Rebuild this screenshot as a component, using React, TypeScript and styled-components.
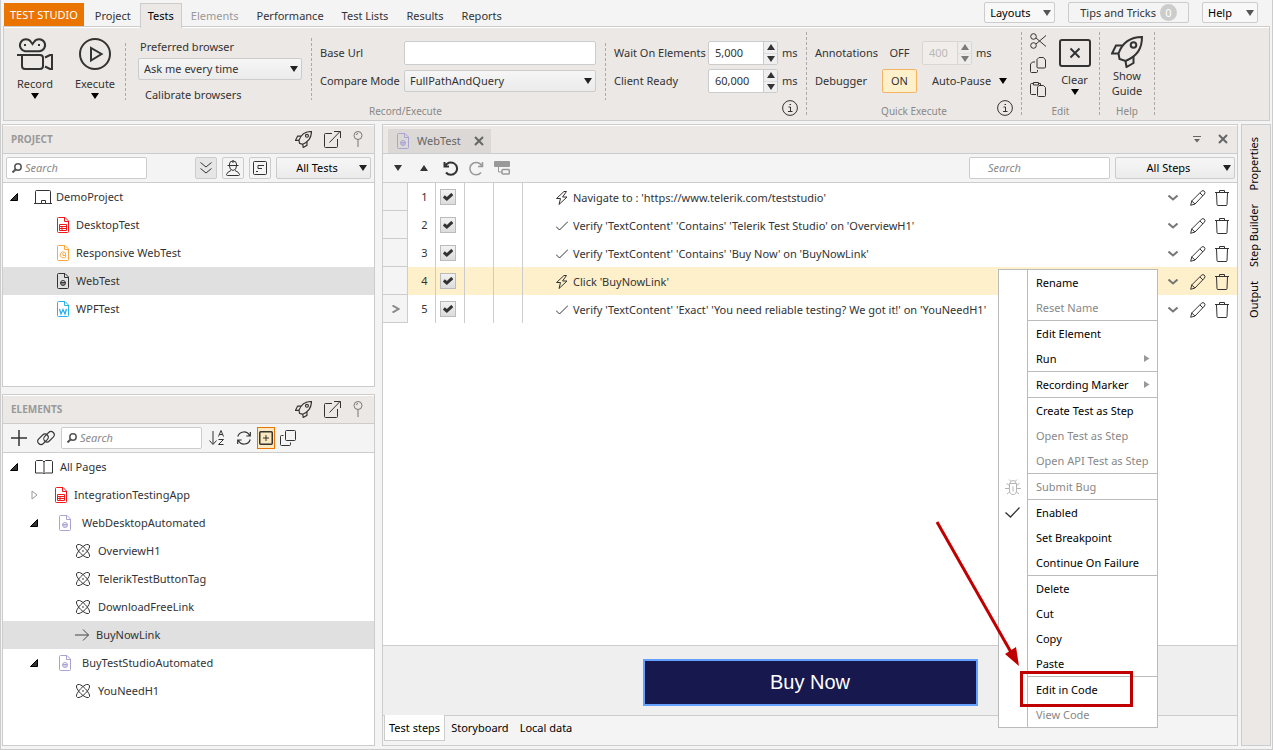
import React from 'react';
import styled, { createGlobalStyle, css } from 'styled-components';

const line = '#cccccc';
const ink = '#333333';
const panel = '#ece8e5';

const GlobalStyle = createGlobalStyle`
  *, *::before, *::after { box-sizing: border-box; }
  body {
    margin: 0;
    background: #f4f4f4;
    color: ${ink};
    font: 11px/16px "Noto Sans", "Open Sans", sans-serif;
  }
  button, input, select { font: inherit; color: inherit; margin: 0; }
  button { padding: 0; border: 0; background: none; cursor: pointer; }
  svg { display: block; flex: none; }
  ul { list-style: none; margin: 0; padding: 0; }
`;

/* ---------- icons ---------- */

type IconProps = { w?: number; h?: number; box?: string; sw?: number; color?: string; children?: React.ReactNode };

const Icon = ({ w = 16, h = 16, box, sw = 1, color = ink, children }: IconProps) => (
  <svg width={w} height={h} viewBox={box || `0 0 ${w} ${h}`} fill="none" stroke={color} strokeWidth={sw} aria-hidden="true">
    {children}
  </svg>
);

const Down = ({ color = '#000', w = 8, h = 6 }: { color?: string; w?: number; h?: number }) => (
  <svg width={w} height={h} viewBox="0 0 8 6" aria-hidden="true">
    <path d="M0 0h8L4 6z" fill={color} />
  </svg>
);

const Up = ({ color = ink, w = 8, h = 6 }: { color?: string; w?: number; h?: number }) => (
  <svg width={w} height={h} viewBox="0 0 8 6" aria-hidden="true">
    <path d="M0 6h8L4 0z" fill={color} />
  </svg>
);

const CameraIcon = () => (
  <Icon w={36} h={32} sw={2}>
    <path d="M8 13.200a6 6 0 1 1 6-9.200l1.500 2 1.500-2a6 6 0 1 1 5 9.200z" />
    <path d="M7 7h2M21 7h2" />
    <path d="M0 17h23q3 0 3 3v8q0 3-3 3H8q-3 0-3-3V17" />
    <path d="M28 19.500 33 17h2v14h-2l-5-2.500" />
  </Icon>
);

const PlayIcon = () => (
  <Icon w={32} h={32} sw={2}>
    <circle cx="16" cy="16" r="15" />
    <path d="M12 10v12.500L22.500 16z" />
  </Icon>
);

const ClearIcon = () => (
  <Icon w={32} h={28} sw={2}>
    <rect x="1" y="1" width="30" height="26" rx="2" />
    <path d="m11.500 9.500 9 9m0-9-9 9" />
  </Icon>
);

const RocketIcon = ({ size = 32, sw = 2 }: { size?: number; sw?: number }) => (
  <Icon w={size} h={size} box="0 0 32 32" sw={sw}>
    <path d="M31 1C21 1 12 5 7.500 17.500L8.500 23l6 2C26 20 31 13 31 1z" />
    <circle cx="22.500" cy="9" r="2.800" />
    <path d="M11.500 9.500H5L1 17.500h6.500M14.500 25l1 6 7-4v-7" />
  </Icon>
);

const ScissorsIcon = () => (
  <Icon w={17} h={16}>
    <circle cx="3.500" cy="3.500" r="2.800" />
    <circle cx="3.500" cy="12.500" r="2.800" />
    <path d="M6 5 16 13.500M6 11 16 2.500" />
  </Icon>
);

const CopyIcon = () => (
  <Icon w={16} h={16}>
    <path d="M9 .5h4.500L15.500 3v7q0 1-1 1H8q-1 0-1-1V2.500z" />
    <path d="M5 5H2.500L.5 7v7.500q0 1 1 1h5q1 0 1-1V13" />
  </Icon>
);

const PasteIcon = () => (
  <Icon w={16} h={16}>
    <path d="M6 13.500H1.500q-1 0-1-1v-9q0-1 1-1h2M3.500 1.500h5v2.500h-5zM8.500 2.500h2v2" />
    <path d="M9 4.500h4.500l2 2v8q0 1-1 1H8.500q-1 0-1-1V6z" />
  </Icon>
);

const InfoIcon = () => (
  <Icon w={16} h={16}>
    <circle cx="8" cy="8" r="7.400" />
    <path d="M6.500 7h2v4.500M6 11.500h4.500M7.500 4.500h1.500" />
  </Icon>
);

const PopOutIcon = () => (
  <Icon w={17} h={17}>
    <path d="M8 2.500H1.500q-1 0-1 1v12q0 1 1 1h11q1 0 1-1V8M5.500 11.500 15.500 1M10 .5h6.500V7" />
  </Icon>
);

const PinIcon = () => (
  <Icon w={10} h={16} color="#777">
    <circle cx="5" cy="4.500" r="4" />
    <path d="M3.500 4q0-1.500 1.500-1.500M5 9v7" />
  </Icon>
);

const SearchIcon = () => (
  <Icon w={10} h={10} sw={1.5} color="#555">
    <circle cx="6" cy="4" r="3.200" />
    <path d="M3.700 6.300.5 9.500" strokeWidth="2" />
  </Icon>
);

const ChevronsIcon = () => (
  <Icon w={12} h={12}>
    <path d="m.5.5 5.500 4.500L11.500.5M.5 6.500 6 11l5.500-4.500" />
  </Icon>
);

const WorkerIcon = () => (
  <Icon w={14} h={16}>
    <path d="M1.500 5.500h11M3.500 5V4q0-3 3.500-3t3.500 3v1M7 0v3M3.500 6q0 4 3.500 4.500Q10.500 10 10.500 6M5 10.500Q1 12 .5 14.500q0 1 1 1h11q1 0 1-1Q13 12 9 10.500" />
  </Icon>
);

const ReportIcon = () => (
  <Icon w={14} h={14}>
    <rect x=".5" y=".5" width="13" height="13" rx="1" />
    <path d="M5 4.500h6M5 7.500h4M5 4.500v3M3 10.500h2" />
  </Icon>
);

const LaptopIcon = () => (
  <Icon w={18} h={14}>
    <path d="M1.500 13V1.500q0-1 1-1h13q1 0 1 1V13M0 13.500h18M7.500 13v-2.500h4V13" />
  </Icon>
);

const BookIcon = () => (
  <Icon w={18} h={14}>
    <path d="M9 2v11M9 2 7.500.5h-6l-1 1v11.500h7L9 14l1.500-1h7V1.500l-1-1h-6z" />
  </Icon>
);

const sheet = 'M1.500.5H8L11.500 4v10.500q0 1-1 1h-9q-1 0-1-1v-13q0-1 1-1zM7.500.5V4.500h4';

const SheetIcon = ({ kind }: { kind: 'desktop' | 'mobile' | 'web' | 'webLight' | 'wpf' }) => {
  const color = { desktop: '#f01818', mobile: '#ffa53c', web: ink, webLight: '#a9a3d4', wpf: '#2bb0ec' }[kind];
  return (
    <Icon w={12} h={16} color={color}>
      <path d={sheet} />
      {kind === 'desktop' && <path d="M2.500 7.500h7v6h-7zM2.500 9.500h7M2.500 11.500h7M5 9.500v4" />}
      {kind === 'mobile' && <path d="M8 7.500A3 3 0 1 0 9 11M6 8v2.500h2.500V8" />}
      {(kind === 'web' || kind === 'webLight') && (
        <>
          <circle cx="6" cy="10" r="2.500" />
          <path d="M4 9.500h4M4 11h4" />
        </>
      )}
      {kind === 'wpf' && <path d="m2.500 8 1.500 5L6 8.500 8 13l1.500-5" strokeWidth="1.300" />}
    </Icon>
  );
};

const AtomIcon = () => (
  <Icon w={14} h={14} color="#333" sw={1}>
    <path d="M2 .5h1.500C7 1.500 12 7 13.500 11v1.500l-1 1H11C7 12.500 1.500 7 .5 3V1.500z" />
    <path d="M12 .5h-1.500C7 1.500 2 7 .5 11v1.500l1 1H3C7 12.500 12.500 7 13.500 3V1.500z" />
    <circle cx="7" cy="7" r=".4" />
  </Icon>
);

const ArrowIcon = () => (
  <Icon w={14} h={12} color="#444">
    <path d="M0 6h13.500M8 .5 13.500 6 8 11.500" />
  </Icon>
);

const Expanded = () => (
  <svg width="8" height="8" viewBox="0 0 8 8" aria-hidden="true">
    <path d="M7.500.5v7h-7z" fill="#333" stroke="#000" />
  </svg>
);

const Collapsed = () => (
  <Icon w={7} h={10} color="#999">
    <path d="M1 1v8l5-4z" />
  </Icon>
);

const PlusIcon = () => (
  <Icon w={16} h={16}>
    <path d="M8 0v16M0 8h16" strokeWidth="1.500" />
  </Icon>
);

const LinkIcon = () => (
  <Icon w={20} h={16} sw={1.1}>
    <rect x="1" y="6" width="12" height="6.500" rx="3.250" transform="rotate(-45 7 9.250)" />
    <rect x="7" y="3.500" width="12" height="6.500" rx="3.250" transform="rotate(-45 13 6.750)" />
  </Icon>
);

const SortIcon = () => (
  <Icon w={16} h={16}>
    <path d="M4 1v13M.5 10.500 4 14.500l3.500-4" />
    <path d="M9.500 6.500 12 .5l2.500 6M10.500 4.500h3M9.500 9.500h5l-5 5h5" />
  </Icon>
);

const RefreshIcon = () => (
  <Icon w={14} h={14} sw={1.2}>
    <path d="M.8 5.500A6.300 6.300 0 0 1 12.500 4.500M13.200 8.500A6.300 6.300 0 0 1 1.500 9.500M13.300 1v4h-4M.7 13V9h4" />
  </Icon>
);

const AddBoxIcon = () => (
  <Icon w={14} h={14}>
    <rect x=".75" y=".75" width="12.500" height="12.500" rx="1" strokeWidth="1.500" />
    <path d="M7 4v6M4 7h6" />
  </Icon>
);

const WindowsIcon = () => (
  <Icon w={16} h={16}>
    <rect x="5.500" y=".5" width="10" height="10" rx="1" />
    <path d="M3.500 5.500h-2q-1 0-1 1v8q0 1 1 1h8q1 0 1-1v-2" />
  </Icon>
);

const CloseIcon = () => (
  <Icon w={10} h={10} sw={2} color="#666">
    <path d="m1 1 8 8m0-8L1 9" />
  </Icon>
);

const UndoIcon = ({ redo = false }: { redo?: boolean }) => (
  <Icon w={15} h={15} sw={redo ? 1.5 : 2} color={redo ? '#999' : ink}>
    <g transform={redo ? 'translate(15 0) scale(-1 1)' : undefined}>
      <path d="M1.500 1v4.500H6M2 5.500A6.200 6.200 0 1 1 3 11.500" />
    </g>
  </Icon>
);

const GroupIcon = () => (
  <Icon w={16} h={14} color="#999">
    <rect x="0" y="0" width="16" height="6" rx="1" fill="#999" stroke="none" />
    <path d="M4.500 6v5H8" />
    <rect x="8" y="8.500" width="7.300" height="4.500" rx="1" strokeWidth="1.500" />
  </Icon>
);

const BoltIcon = () => (
  <Icon w={12} h={14}>
    <path d="M8 .5.500 7.500h4L3 13.500l8-7.500H6.500L10.500.5z" />
  </Icon>
);

const ThinCheckIcon = () => (
  <Icon w={12} h={10}>
    <path d="m0 5.500 3.500 3.500L12 .5" />
  </Icon>
);

const ChevronDownIcon = () => (
  <Icon w={10} h={6} sw={2} color="#777">
    <path d="m.5.5 4.500 4 4.500-4" />
  </Icon>
);

const ChevronRightIcon = () => (
  <Icon w={8} h={8} sw={2} color="#888">
    <path d="m.5.500 6 3.500-6 3.500" />
  </Icon>
);

const PencilIcon = () => (
  <Icon w={16} h={16}>
    <path d="m.7 15.300 1-4.300L11.500 1.200q1.500-1.200 2.800 0t.2 2.800L5 14z M10 3l3 3M1.700 11 5 14" />
  </Icon>
);

const TrashIcon = () => (
  <Icon w={14} h={16}>
    <path d="M0 2.500h14M4.500 2.500v-2h5v2M1.500 2.500l.5 12q0 1 1 1h8q1 0 1-1l.5-12" />
  </Icon>
);

const BugIcon = () => (
  <Icon w={16} h={16} color="#b5b5b5">
    <path d="M5 4.500q0-3 3-3t3 3M4.500 4.500h7V11q0 4.500-3.500 4.500T4.500 11zM8 7.500v5M5.500 2 4 .5M10.500 2 12 .5M4.500 6.500l-3-2M11.500 6.500l3-2M4.500 9.500H0M11.500 9.500H16M5 12.500l-3 2.500M11 12.500l3 2.500" />
  </Icon>
);

const MenuCheckIcon = () => (
  <Icon w={15} h={11} sw={1.3}>
    <path d="m.5 5.500 5 4.500L14.500.5" />
  </Icon>
);

/* ---------- frame ---------- */

const Page = styled.div`
  display: flex;
  flex-direction: column;
  min-height: 100vh;
  padding: 0 1px 3px;
  border: solid ${line};
  border-width: 0 1px 1px;
  overflow: hidden;
`;

const Header = styled.header`
  display: flex;
  justify-content: space-between;
  height: 26px;
  padding: 0 13px 0 2px;
`;

const Tabs = styled.nav`
  display: flex;
  align-items: flex-end;
`;

const AppButton = styled.button`
  height: 23px;
  margin-right: 2px;
  padding: 0 6px;
  background: #e97400;
  color: #fff;
`;

const RibbonTab = styled.button<{ $active?: boolean }>`
  height: 23px;
  padding: 2px 9px 0;
  &:disabled { color: #999; }
  ${p => p.$active && css`
    position: relative;
    height: 25px;
    margin-bottom: -2px;
    padding: 0 7px;
    border: 1px solid ${line};
    border-bottom: 0;
    background: ${panel};
    color: #000;
  `}
`;

const HeaderTools = styled.div`
  display: flex;
  gap: 13px;
  padding-top: 2px;
`;

const TipsButton = styled.button`
  display: flex;
  align-items: center;
  gap: 4px;
  height: 21px;
  padding: 0 11px;
  border: 1px solid ${line};
  border-radius: 2px;
`;

const Badge = styled.span`
  width: 17px;
  border-radius: 9px;
  background: #ccc;
  color: #fff;
  line-height: 17px;
  text-align: center;
`;

/* ---------- shared controls ---------- */

const SelectBox = styled.span<{ $w: number; $h?: number }>`
  display: grid;
  flex: none;
  align-items: center;
  width: ${p => p.$w}px;
  height: ${p => p.$h || 22}px;
  > * { grid-area: 1 / 1; }
  > svg { justify-self: end; margin-right: 4px; pointer-events: none; }
`;

const SelectField = styled.select<{ $center?: boolean; $flat?: boolean }>`
  appearance: none;
  width: 100%;
  height: 100%;
  padding: 0 ${p => (p.$center ? 18 : 5)}px 0 5px;
  border: 1px solid ${line};
  border-radius: 2px;
  background: ${p => (p.$flat ? '#f8f8f8' : 'linear-gradient(#f6f6f6, #ebebeb)')};
  color: ${p => (p.$center || p.$flat ? '#000' : ink)};
  text-align-last: ${p => (p.$center ? 'center' : 'left')};
`;

type DropProps = { id?: string; label?: string; value: string; w: number; h?: number; center?: boolean; flat?: boolean };

const Drop = ({ id, label, value, w, h, center, flat }: DropProps) => (
  <SelectBox $w={w} $h={h}>
    <SelectField id={id} aria-label={label} $center={center} $flat={flat}>
      <option>{value}</option>
    </SelectField>
    <Down color={flat ? '#555' : '#222'} />
  </SelectBox>
);

const TextField = styled.input`
  width: 100%;
  height: 24px;
  padding: 0 6px;
  border: 1px solid ${line};
  border-radius: 2px;
  background: #fff;
`;

const SearchBox = styled.label<{ $bare?: boolean }>`
  display: flex;
  align-items: center;
  gap: 3px;
  width: 141px;
  height: 22px;
  padding-left: ${p => (p.$bare ? 18 : 5)}px;
  border: 1px solid ${line};
  border-radius: 2px;
  background: #fff;
`;

const SearchInput = styled.input`
  flex: 1;
  min-width: 0;
  padding: 0;
  border: 0;
  outline: 0;
  background: none;
  font-style: italic;
  &::placeholder { color: #888; opacity: 1; }
`;

const Spin = styled.span<{ $w: number; $off?: boolean }>`
  display: flex;
  width: ${p => p.$w}px;
  height: 24px;
  border: 1px solid ${line};
  border-radius: 2px;
  background: ${p => (p.$off ? '#f3f1f0' : '#fff')};
  opacity: ${p => (p.$off ? 0.6 : 1)};
`;

const SpinInput = styled.input`
  flex: 1;
  min-width: 0;
  padding: 0 6px;
  border: 0;
  background: none;
  &:disabled { color: #999; }
`;

const SpinButtons = styled.span`
  display: flex;
  flex-direction: column;
  width: 14px;
  border-left: 1px solid ${line};
  background: #efefef;
  button {
    flex: 1;
    display: flex;
    align-items: center;
    justify-content: center;
  }
  button + button { border-top: 1px solid #ddd; }
`;

const Spinner = ({ id, value, w, off }: { id: string; value: string; w: number; off?: boolean }) => (
  <Spin $w={w} $off={off}>
    <SpinInput id={id} defaultValue={value} disabled={off} />
    <SpinButtons>
      <button type="button" aria-label="Increase" disabled={off}><Up /></button>
      <button type="button" aria-label="Decrease" disabled={off}><Down color={ink} /></button>
    </SpinButtons>
  </Spin>
);

/* ---------- ribbon ---------- */

const Ribbon = styled.section`
  display: flex;
  min-height: 95px;
  margin: 0 1px;
  padding: 1px 0 0 1px;
  border: 1px solid ${line};
  background: ${panel};
  box-shadow: inset 0 1px #fff;
`;

const Group = styled.div`
  display: flex;
  flex-direction: column;
`;

const GroupBody = styled.div`
  display: flex;
  height: 72px;
`;

const GroupFooter = styled.div`
  display: grid;
  grid-template-columns: 1fr auto 1fr;
  height: 20px;
  padding: 0 8px;
  color: #888;
  font-size: 10px;
  line-height: 22px;
  button { grid-column: 3; justify-self: end; align-self: start; }
  span { grid-column: 2; }
`;

const Rule = styled.i<{ $top?: number; $bottom?: number }>`
  flex: none;
  width: 1px;
  margin: ${p => p.$top || 4}px 0 ${p => p.$bottom || 0}px;
  background: repeating-linear-gradient(#aaa 0 3px, transparent 3px 5px);
`;

const BigButton = styled.button<{ $w: number; $top: number; $gap: number }>`
  display: flex;
  flex-direction: column;
  align-items: center;
  width: ${p => p.$w}px;
  padding-top: ${p => p.$top}px;
  line-height: 15px;
  > svg:first-child { margin-bottom: ${p => p.$gap}px; }
  > svg + span + svg { margin-top: 2px; }
`;

const BrowserColumn = styled.div`
  display: flex;
  flex-direction: column;
  align-items: flex-start;
  margin: 0 9px 0 12px;
  padding-top: 12px;
  line-height: 14px;
  > label { padding-left: 2px; margin-bottom: 4px; }
  > button { margin-top: 8px; padding-left: 7px; }
`;

const Fields = styled.div<{ $cols: string; $gap: number }>`
  display: grid;
  grid-template-columns: ${p => p.$cols};
  grid-template-rows: 24px 24px;
  row-gap: 4px;
  align-items: center;
  align-content: start;
  padding: 13px ${p => p.$gap}px 0 8px;
  white-space: nowrap;
`;

const Unit = styled.span`
  padding-left: 4px;
`;

const Toggle = styled.button<{ $on?: boolean }>`
  width: 35px;
  height: 24px;
  border: 1px solid ${p => (p.$on ? '#f5b463' : 'transparent')};
  border-radius: 2px;
  background: ${p => (p.$on ? '#fff0cc' : 'none')};
`;

const AutoPause = styled.button`
  grid-column: 3 / 5;
  display: flex;
  align-items: center;
  gap: 8px;
  padding-left: 10px;
`;

const IconColumn = styled.div`
  display: flex;
  flex-direction: column;
  gap: 8px;
  padding: 5px 3px 0 8px;
`;

const RibbonBar = () => (
  <Ribbon>
    <Group>
      <GroupBody>
        <BigButton $w={60} $top={10} $gap={6}><CameraIcon /><span>Record</span><Down /></BigButton>
        <BigButton $w={60} $top={10} $gap={6}><PlayIcon /><span>Execute</span><Down /></BigButton>
        <Rule $top={15} />
        <BrowserColumn>
          <label htmlFor="browser">Preferred browser</label>
          <Drop id="browser" value="Ask me every time" w={164} />
          <button>Calibrate browsers</button>
        </BrowserColumn>
        <Rule $top={10} />
        <Fields $cols="84px 192px" $gap={9}>
          <label htmlFor="baseUrl">Base Url</label>
          <TextField id="baseUrl" />
          <label htmlFor="compare">Compare Mode</label>
          <Drop id="compare" value="FullPathAndQuery" w={192} />
        </Fields>
        <Rule $top={15} />
        <Fields $cols="94px 70px 20px" $gap={8}>
          <label htmlFor="wait">Wait On Elements</label>
          <Spinner id="wait" value="5,000" w={70} />
          <Unit>ms</Unit>
          <label htmlFor="ready">Client Ready</label>
          <Spinner id="ready" value="60,000" w={70} />
          <Unit>ms</Unit>
        </Fields>
      </GroupBody>
      <GroupFooter>
        <span>Record/Execute</span>
        <button aria-label="Record information"><InfoIcon /></button>
      </GroupFooter>
    </Group>
    <Rule $bottom={4} />
    <Group>
      <GroupBody>
        <Fields $cols="67px 40px 50px 49px" $gap={0}>
          <label htmlFor="delay">Annotations</label>
          <Toggle>OFF</Toggle>
          <Spinner id="delay" value="400" w={50} off />
          <Unit>ms</Unit>
          <span>Debugger</span>
          <Toggle $on>ON</Toggle>
          <AutoPause>Auto-Pause <Down /></AutoPause>
        </Fields>
      </GroupBody>
      <GroupFooter>
        <span>Quick Execute</span>
        <button aria-label="Execute information"><InfoIcon /></button>
      </GroupFooter>
    </Group>
    <Rule $bottom={4} />
    <Group>
      <GroupBody>
        <IconColumn>
          <button aria-label="Cut"><ScissorsIcon /></button>
          <button aria-label="Copy"><CopyIcon /></button>
          <button aria-label="Paste"><PasteIcon /></button>
        </IconColumn>
        <BigButton $w={49} $top={11} $gap={5}><ClearIcon /><span>Clear</span><Down /></BigButton>
      </GroupBody>
      <GroupFooter><span>Edit</span></GroupFooter>
    </Group>
    <Rule $bottom={4} />
    <Group>
      <GroupBody>
        <BigButton $w={54} $top={8} $gap={0}><RocketIcon /><span>Show<br />Guide</span></BigButton>
      </GroupBody>
      <GroupFooter><span>Help</span></GroupFooter>
    </Group>
    <Rule $bottom={4} />
  </Ribbon>
);

/* ---------- docked panels ---------- */

const Dock = styled.div`
  flex: 1;
  display: flex;
  margin-top: 3px;
`;

const Side = styled.aside`
  flex: 0 0 373px;
  display: flex;
  flex-direction: column;
  gap: 7px;
  margin-right: 7px;
`;

const Panel = styled.section<{ $grow: number }>`
  flex: ${p => p.$grow} 1 0;
  display: flex;
  flex-direction: column;
  min-width: 0;
  border: 1px solid ${line};
  background: #fff;
`;

const PanelHead = styled.div`
  display: flex;
  align-items: center;
  gap: 12px;
  height: 29px;
  padding: 0 11px 0 8px;
  border-bottom: 1px solid ${line};
  background: ${panel};
  box-shadow: inset 0 1px #fff;
`;

const PanelTitle = styled.h2`
  flex: 1;
  margin: 0;
  color: #999;
  font-size: 10px;
  font-weight: 700;
`;

const Toolbar = styled.div<{ $pad?: number }>`
  display: flex;
  align-items: center;
  height: 29px;
  padding: 0 ${p => p.$pad || 3}px;
  border-bottom: 1px solid ${line};
  background: #f4f4f4;
`;

const Spacer = styled.span`
  flex: 1;
`;

const Filters = styled.div`
  display: flex;
  gap: 5px;
`;

const SquareButton = styled.button<{ $pressed?: boolean }>`
  display: flex;
  align-items: center;
  justify-content: center;
  width: 22px;
  height: 22px;
  border: 1px solid ${line};
  border-radius: 2px;
  background: ${p => (p.$pressed ? '#e6e6e6' : '#f4f4f4')};
`;

const ToolButton = styled.button<{ $w: number; $on?: boolean }>`
  display: flex;
  align-items: center;
  justify-content: center;
  width: ${p => p.$w}px;
  height: 22px;
  ${p => p.$on && css`
    margin: 0 1px;
    border: 1px solid #e97400;
    background: #fbe8c0;
  `}
`;

const TreeRow = styled.li<{ $indent: number; $gap: number; $selected?: boolean }>`
  display: flex;
  align-items: center;
  gap: ${p => p.$gap}px;
  height: 28px;
  padding-left: ${p => p.$indent}px;
  background: ${p => (p.$selected ? '#e0e0e0' : 'none')};
`;

const Twist = styled.span<{ $w: number; $gap: number }>`
  width: ${p => p.$w}px;
  margin-right: -${p => p.$gap}px;
`;

type Node = { indent: number; gap: number; twist?: number; open?: boolean; icon: React.ReactNode; text: string; selected?: boolean };

const Tree = ({ nodes }: { nodes: Node[] }) => (
  <ul role="tree">
    {nodes.map(n => (
      <TreeRow key={n.text} role="treeitem" aria-selected={!!n.selected} $indent={n.indent} $gap={n.gap} $selected={n.selected}>
        {n.twist && <Twist $w={n.twist} $gap={n.gap}>{n.open ? <Expanded /> : <Collapsed />}</Twist>}
        {n.icon}
        <span>{n.text}</span>
      </TreeRow>
    ))}
  </ul>
);

const projectNodes: Node[] = [
  { indent: 7, gap: 4, twist: 24, open: true, icon: <LaptopIcon />, text: 'DemoProject' },
  { indent: 54, gap: 7, icon: <SheetIcon kind="desktop" />, text: 'DesktopTest' },
  { indent: 54, gap: 7, icon: <SheetIcon kind="mobile" />, text: 'Responsive WebTest' },
  { indent: 54, gap: 7, icon: <SheetIcon kind="web" />, text: 'WebTest', selected: true },
  { indent: 54, gap: 7, icon: <SheetIcon kind="wpf" />, text: 'WPFTest' },
];

const elementNodes: Node[] = [
  { indent: 7, gap: 7, twist: 25, open: true, icon: <BookIcon />, text: 'All Pages' },
  { indent: 28, gap: 7, twist: 24, icon: <SheetIcon kind="desktop" />, text: 'IntegrationTestingApp' },
  { indent: 27, gap: 11, twist: 29, open: true, icon: <SheetIcon kind="webLight" />, text: 'WebDesktopAutomated' },
  { indent: 73, gap: 8, icon: <AtomIcon />, text: 'OverviewH1' },
  { indent: 73, gap: 8, icon: <AtomIcon />, text: 'TelerikTestButtonTag' },
  { indent: 73, gap: 8, icon: <AtomIcon />, text: 'DownloadFreeLink' },
  { indent: 72, gap: 7, icon: <ArrowIcon />, text: 'BuyNowLink', selected: true },
  { indent: 27, gap: 11, twist: 29, open: true, icon: <SheetIcon kind="webLight" />, text: 'BuyTestStudioAutomated' },
  { indent: 73, gap: 8, icon: <AtomIcon />, text: 'YouNeedH1' },
];

const PanelTop = ({ title }: { title: string }) => (
  <PanelHead>
    <PanelTitle>{title}</PanelTitle>
    <button aria-label="Guide"><RocketIcon size={17} sw={2.2} /></button>
    <button aria-label="Pop out"><PopOutIcon /></button>
    <button aria-label="Pin"><PinIcon /></button>
  </PanelHead>
);

const SearchField = ({ label, bare }: { label: string; bare?: boolean }) => (
  <SearchBox $bare={bare}>
    {!bare && <SearchIcon />}
    <SearchInput placeholder="Search" aria-label={label} />
  </SearchBox>
);

/* ---------- test editor ---------- */

const EditorHead = styled(PanelHead)`
  align-items: flex-end;
  padding: 0 9px 0 5px;
`;

const DocTab = styled.div`
  display: flex;
  align-items: center;
  gap: 8px;
  height: 24px;
  padding: 0 7px 0 9px;
  background: #dcd8d5;
  color: #666;
  button { margin-left: 5px; }
`;

const HeadButtons = styled.div`
  display: flex;
  align-items: center;
  gap: 17px;
  height: 28px;
  margin-left: auto;
`;

const Steps = styled.div`
  flex: 1;
`;

const StepTable = styled.table`
  width: 100%;
  border-collapse: collapse;
  table-layout: fixed;
  td { height: 28px; padding: 0; }
`;

const StepRow = styled.tr<{ $selected?: boolean }>`
  background: ${p => (p.$selected ? '#fff0cc' : 'none')};
`;

const Gutter = styled.td`
  background: #f4f4f4;
  box-shadow: inset -1px -1px ${line};
  svg { margin: 0 auto; }
`;

const Cell = styled.td`
  box-shadow: inset -1px 0 ${line};
`;

const Num = styled(Cell)`
  text-align: center;
  text-indent: 5px;
`;

const CheckWrap = styled.label`
  display: grid;
  place-items: center;
  width: 16px;
  margin: 0 auto 0 4px;
  > * { grid-area: 1 / 1; }
  svg { pointer-events: none; }
`;

const CheckInput = styled.input`
  appearance: none;
  width: 16px;
  height: 16px;
  border: 1px solid #bbb;
  background: linear-gradient(#f2f2f2, #dcdcdc);
`;

const StepText = styled.div`
  display: grid;
  grid-template-columns: 17px auto;
  align-items: center;
  padding: 2px 0 0 33px;
  white-space: nowrap;
`;

const Actions = styled.div`
  display: flex;
  align-items: center;
  justify-content: flex-end;
  gap: 9px;
  padding: 2px 8px 0 0;
  button:first-child { margin-right: 3px; }
`;

const steps: { bolt?: boolean; text: string; selected?: boolean; current?: boolean }[] = [
  { bolt: true, text: "Navigate to : 'https://www.telerik.com/teststudio'" },
  { text: "Verify 'TextContent' 'Contains' 'Telerik Test Studio' on 'OverviewH1'" },
  { text: "Verify 'TextContent' 'Contains' 'Buy Now' on 'BuyNowLink'" },
  { bolt: true, text: "Click 'BuyNowLink'", selected: true },
  { text: "Verify 'TextContent' 'Exact' 'You need reliable testing? We got it!' on 'YouNeedH1'", current: true },
];

const Preview = styled.div`
  display: flex;
  justify-content: center;
  padding: 13px 0 9px;
  border: solid ${line};
  border-width: 1px 0;
  background: #efefef;
`;

const BuyNow = styled.div`
  width: 335px;
  border: 2px solid #64a0ff;
  background: #16184e;
  color: #fff;
  font: 20px/43px "Liberation Sans", Arial, sans-serif;
  text-align: center;
`;

const BottomTabs = styled.nav`
  display: flex;
  gap: 1px;
  height: 29px;
  padding-left: 1px;
  background: #f4f4f4;
`;

const BottomTab = styled.button<{ $active?: boolean }>`
  height: 26px;
  margin-top: -1px;
  padding: 0 4px;
  border: 1px solid ${p => (p.$active ? line : 'transparent')};
  border-top: 0;
  background: ${p => (p.$active ? '#fff' : 'none')};
  color: #000;
`;

const Rail = styled.nav`
  flex: 0 0 30px;
  display: flex;
  flex-direction: column;
  align-items: center;
  gap: 14px;
  margin-left: 3px;
  padding-top: 12px;
  border: 1px solid ${line};
  background: ${panel};
`;

const RailTab = styled.button`
  margin-right: 4px;
  color: #000;
  writing-mode: vertical-rl;
  transform: rotate(180deg);
`;

const Editor = () => (
  <Panel $grow={1}>
    <EditorHead>
      <DocTab>
        <SheetIcon kind="webLight" />
        <span>WebTest</span>
        <button aria-label="Close WebTest"><CloseIcon /></button>
      </DocTab>
      <HeadButtons>
        <button aria-label="Document list">
          <Icon w={8} h={7} color="#666"><path d="M0 .5h8" /><path d="M1 3h6L4 6.500z" fill="#666" stroke="none" /></Icon>
        </button>
        <button aria-label="Close"><CloseIcon /></button>
      </HeadButtons>
    </EditorHead>
    <Toolbar $pad={2}>
      <ToolButton $w={26} aria-label="Move down"><Down color={ink} /></ToolButton>
      <ToolButton $w={26} aria-label="Move up"><Up /></ToolButton>
      <ToolButton $w={26} aria-label="Undo"><UndoIcon /></ToolButton>
      <ToolButton $w={26} aria-label="Redo"><UndoIcon redo /></ToolButton>
      <ToolButton $w={26} aria-label="Group"><GroupIcon /></ToolButton>
      <Spacer />
      <Filters>
        <SearchField label="Search steps" bare />
        <Drop label="Step filter" value="All Steps" w={120} center />
      </Filters>
    </Toolbar>
    <Steps>
      <StepTable>
        <colgroup>
          <col width="25" /><col width="28" /><col width="29" /><col width="29" /><col width="29" /><col /><col width="90" />
        </colgroup>
        <tbody>
          {steps.map((s, i) => (
            <StepRow key={s.text} $selected={s.selected}>
              <Gutter>{s.current && <ChevronRightIcon />}</Gutter>
              <Num>{i + 1}</Num>
              <Cell>
                <CheckWrap>
                  <CheckInput type="checkbox" defaultChecked aria-label={`Enable step ${i + 1}`} />
                  <Icon w={10} h={8} sw={3}><path d="m.8 3.500 3 2.500L9.300 1" /></Icon>
                </CheckWrap>
              </Cell>
              <Cell />
              <Cell />
              <td>
                <StepText>{s.bolt ? <BoltIcon /> : <ThinCheckIcon />}<span>{s.text}</span></StepText>
              </td>
              <td>
                <Actions>
                  <button aria-label="Expand step"><ChevronDownIcon /></button>
                  <button aria-label="Edit step"><PencilIcon /></button>
                  <button aria-label="Delete step"><TrashIcon /></button>
                </Actions>
              </td>
            </StepRow>
          ))}
        </tbody>
      </StepTable>
    </Steps>
    <Preview><BuyNow>Buy Now</BuyNow></Preview>
    <BottomTabs>
      <BottomTab $active>Test steps</BottomTab>
      <BottomTab>Storyboard</BottomTab>
      <BottomTab>Local data</BottomTab>
    </BottomTabs>
  </Panel>
);

/* ---------- context menu ---------- */

const Menu = styled.div`
  position: absolute;
  top: 269px;
  left: 998px;
  width: 160px;
  border: 1px solid #bbb;
  background: #fff;
  color: #000;
`;

const MenuSection = styled.ul`
  margin-left: 28px;
  border-left: 1px solid #bbb;
  & + & { border-top: 1px solid #bbb; }
`;

const MenuItem = styled.li`
  display: flex;
  align-items: center;
  height: 25px;
  margin-left: -29px;
`;

const MenuMark = styled.span`
  display: flex;
  justify-content: center;
  width: 27px;
  margin-right: 10px;
`;

const MenuButton = styled.button`
  flex: 1;
  display: flex;
  align-items: center;
  justify-content: space-between;
  padding-right: 7px;
  white-space: nowrap;
  &:disabled { color: #888; }
`;

const Highlight = styled.span`
  position: absolute;
  right: 24px;
  bottom: 20px;
  width: 113px;
  height: 36px;
  border: 3px solid #c00000;
  pointer-events: none;
`;

const Pointer = styled.span`
  position: absolute;
  left: -64px;
  bottom: 58px;
  pointer-events: none;
`;

type Item = { text: string; off?: boolean; sub?: boolean; mark?: React.ReactNode };

const menu: Item[][] = [
  [{ text: 'Rename' }, { text: 'Reset Name', off: true }],
  [{ text: 'Edit Element' }, { text: 'Run', sub: true }],
  [{ text: 'Recording Marker', sub: true }],
  [{ text: 'Create Test as Step' }, { text: 'Open Test as Step', off: true }, { text: 'Open API Test as Step', off: true }],
  [{ text: 'Submit Bug', off: true, mark: <BugIcon /> }],
  [{ text: 'Enabled', mark: <MenuCheckIcon /> }, { text: 'Set Breakpoint' }, { text: 'Continue On Failure' }],
  [{ text: 'Delete' }, { text: 'Cut' }, { text: 'Copy' }, { text: 'Paste' }],
  [{ text: 'Edit in Code' }, { text: 'View Code', off: true }],
];

const ContextMenu = () => (
  <Menu>
    {menu.map(section => (
      <MenuSection key={section[0].text}>
        {section.map(item => (
          <MenuItem key={item.text}>
            <MenuMark>{item.mark}</MenuMark>
            <MenuButton disabled={item.off}>
              {item.text}
              {item.sub && <svg width="6" height="7" viewBox="0 0 6 7"><path d="M0 0v7l5.500-3.500z" fill="#999" /></svg>}
            </MenuButton>
          </MenuItem>
        ))}
      </MenuSection>
    ))}
    <Highlight />
    <Pointer>
      <svg width="90" height="150" viewBox="0 0 90 150" aria-hidden="true">
        <path d="M2 3 77 135" stroke="#c00000" strokeWidth="3" />
        <path d="m84 147-14-12 11-7z" fill="#c00000" />
      </svg>
    </Pointer>
  </Menu>
);

export default function App() {
  return (
    <Page>
      <GlobalStyle />
      <Header>
        <Tabs>
          <AppButton>TEST STUDIO</AppButton>
          <RibbonTab>Project</RibbonTab>
          <RibbonTab $active>Tests</RibbonTab>
          <RibbonTab disabled>Elements</RibbonTab>
          <RibbonTab>Performance</RibbonTab>
          <RibbonTab>Test Lists</RibbonTab>
          <RibbonTab>Results</RibbonTab>
          <RibbonTab>Reports</RibbonTab>
        </Tabs>
        <HeaderTools>
          <Drop label="Layouts" value="Layouts" w={71} h={21} flat />
          <TipsButton>Tips and Tricks <Badge>0</Badge></TipsButton>
          <Drop label="Help" value="Help" w={56} h={21} flat />
        </HeaderTools>
      </Header>
      <RibbonBar />
      <Dock>
        <Side>
          <Panel $grow={261}>
            <PanelTop title="PROJECT" />
            <Toolbar>
              <SearchField label="Search project" />
              <Spacer />
              <Filters>
                <SquareButton $pressed aria-label="Collapse all"><ChevronsIcon /></SquareButton>
                <SquareButton aria-label="Worker"><WorkerIcon /></SquareButton>
                <SquareButton aria-label="Report"><ReportIcon /></SquareButton>
                <Drop label="Test filter" value="All Tests" w={95} center />
              </Filters>
            </Toolbar>
            <Tree nodes={projectNodes} />
          </Panel>
          <Panel $grow={350}>
            <PanelTop title="ELEMENTS" />
            <Toolbar>
              <ToolButton $w={25} aria-label="Add element"><PlusIcon /></ToolButton>
              <ToolButton $w={30} aria-label="Link"><LinkIcon /></ToolButton>
              <SearchField label="Search elements" />
              <ToolButton $w={30} aria-label="Sort"><SortIcon /></ToolButton>
              <ToolButton $w={24} aria-label="Refresh"><RefreshIcon /></ToolButton>
              <ToolButton $w={18} $on aria-label="Show all"><AddBoxIcon /></ToolButton>
              <ToolButton $w={24} aria-label="Duplicate"><WindowsIcon /></ToolButton>
            </Toolbar>
            <Tree nodes={elementNodes} />
          </Panel>
        </Side>
        <Editor />
        <Rail>
          <RailTab>Properties</RailTab>
          <RailTab>Step Builder</RailTab>
          <RailTab>Output</RailTab>
        </Rail>
      </Dock>
      <ContextMenu />
    </Page>
  );
}
